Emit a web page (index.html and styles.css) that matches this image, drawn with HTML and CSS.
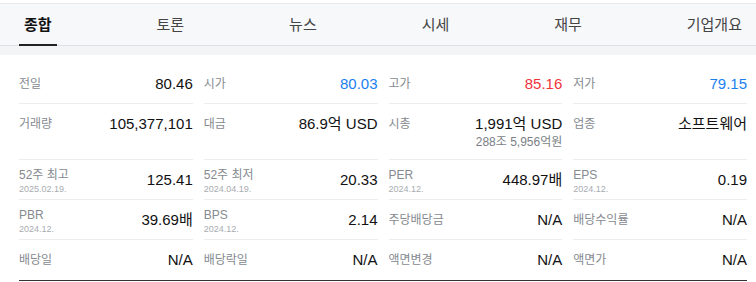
FILE: index.html
```html
<!DOCTYPE html>
<html lang="ko">
<head>
    <meta charset="UTF-8">
    <meta name="viewport" content="width=device-width, initial-scale=1.0">
    <title>종합</title>
    <link rel="stylesheet" href="styles.css">
</head>
<body>
    <div class="page">
        <nav class="tabs">
            <a class="tab active" href="#">종합</a>
            <a class="tab" href="#">토론</a>
            <a class="tab" href="#">뉴스</a>
            <a class="tab" href="#">시세</a>
            <a class="tab" href="#">재무</a>
            <a class="tab" href="#">기업개요</a>
        </nav>
        <div class="strip"></div>

        <div class="grid">
            <!-- row 1 -->
            <div class="cell"><span class="label">전일</span><span class="value">80.46</span></div>
            <div class="cell"><span class="label">시가</span><span class="value down">80.03</span></div>
            <div class="cell"><span class="label">고가</span><span class="value up">85.16</span></div>
            <div class="cell"><span class="label">저가</span><span class="value down">79.15</span></div>

            <!-- row 2 -->
            <div class="cell tall"><span class="label">거래량</span><span class="value">105,377,101</span></div>
            <div class="cell tall"><span class="label">대금</span><span class="value">86.9억 USD</span></div>
            <div class="cell tall">
                <span class="label">시총</span>
                <span class="value">1,991억 USD<span class="sub">288조 5,956억원</span></span>
            </div>
            <div class="cell tall"><span class="label">업종</span><span class="value">소프트웨어</span></div>

            <!-- row 3 -->
            <div class="cell"><span class="label dual">52주 최고<span class="date">2025.02.19.</span></span><span class="value">125.41</span></div>
            <div class="cell"><span class="label dual">52주 최저<span class="date">2024.04.19.</span></span><span class="value">20.33</span></div>
            <div class="cell"><span class="label dual">PER<span class="date">2024.12.</span></span><span class="value">448.97배</span></div>
            <div class="cell"><span class="label dual">EPS<span class="date">2024.12.</span></span><span class="value">0.19</span></div>

            <!-- row 4 -->
            <div class="cell"><span class="label dual">PBR<span class="date">2024.12.</span></span><span class="value">39.69배</span></div>
            <div class="cell"><span class="label dual">BPS<span class="date">2024.12.</span></span><span class="value">2.14</span></div>
            <div class="cell"><span class="label">주당배당금</span><span class="value">N/A</span></div>
            <div class="cell"><span class="label">배당수익률</span><span class="value">N/A</span></div>

            <!-- row 5 -->
            <div class="cell last"><span class="label">배당일</span><span class="value">N/A</span></div>
            <div class="cell last"><span class="label">배당락일</span><span class="value">N/A</span></div>
            <div class="cell last"><span class="label">액면변경</span><span class="value">N/A</span></div>
            <div class="cell last"><span class="label">액면가</span><span class="value">N/A</span></div>
        </div>
    </div>
</body>
</html>
```

FILE: styles.css
```css
/* Base */
body {
    margin: 0;
    background: #ffffff;
    font-family: "Liberation Sans", "Noto Sans CJK KR", sans-serif;
    color: #111;
}

.page {
    padding-top: 3px;
}

/* Tab bar */
.tabs {
    display: flex;
    justify-content: space-between;
    height: 41px;
    padding: 0 9px 0 19px;
    background: #f7f8fa;
    border-top: 1px solid #e8eaed;
    border-bottom: 1px solid #dde2e8;
}

.tab {
    position: relative;
    padding: 0 5px;
    line-height: 41px;
    font-size: 15px;
    color: #444;
    text-decoration: none;
}

.tab.active {
    color: #111;
    font-weight: 700;
}

.tab.active::after {
    content: "";
    position: absolute;
    left: 0;
    right: 0;
    bottom: -1px;
    height: 2px;
    background: #222;
}

.strip {
    height: 9px;
    background: #f3f4f6;
}

/* Summary grid */
.grid {
    display: grid;
    grid-template-columns: repeat(4, 1fr);
    column-gap: 11px;
    margin: 0 9px 0 19px;
    padding-top: 9px;
    border-bottom: 1px solid #333;
}

.cell {
    display: flex;
    justify-content: space-between;
    align-items: flex-start;
    height: 40px;
    box-sizing: border-box;
    padding-top: 10px;
    border-bottom: 1px solid #ebedef;
}

.cell.tall {
    height: 56px;
}

.cell.last {
    border-bottom: none;
}

.label {
    font-size: 12px;
    line-height: 20px;
    color: #858a90;
}

.label.dual {
    display: flex;
    flex-direction: column;
    margin-top: -2px;
    line-height: 14px;
}

.date {
    font-size: 9px;
    color: #a8acb1;
}

.value {
    display: flex;
    flex-direction: column;
    align-items: flex-end;
    font-size: 15px;
    line-height: 20px;
    white-space: nowrap;
}

.value.up {
    color: #f0343a;
}

.value.down {
    color: #1b7ff0;
}

.sub {
    font-size: 12px;
    line-height: 16px;
    color: #7a7f85;
}
```
